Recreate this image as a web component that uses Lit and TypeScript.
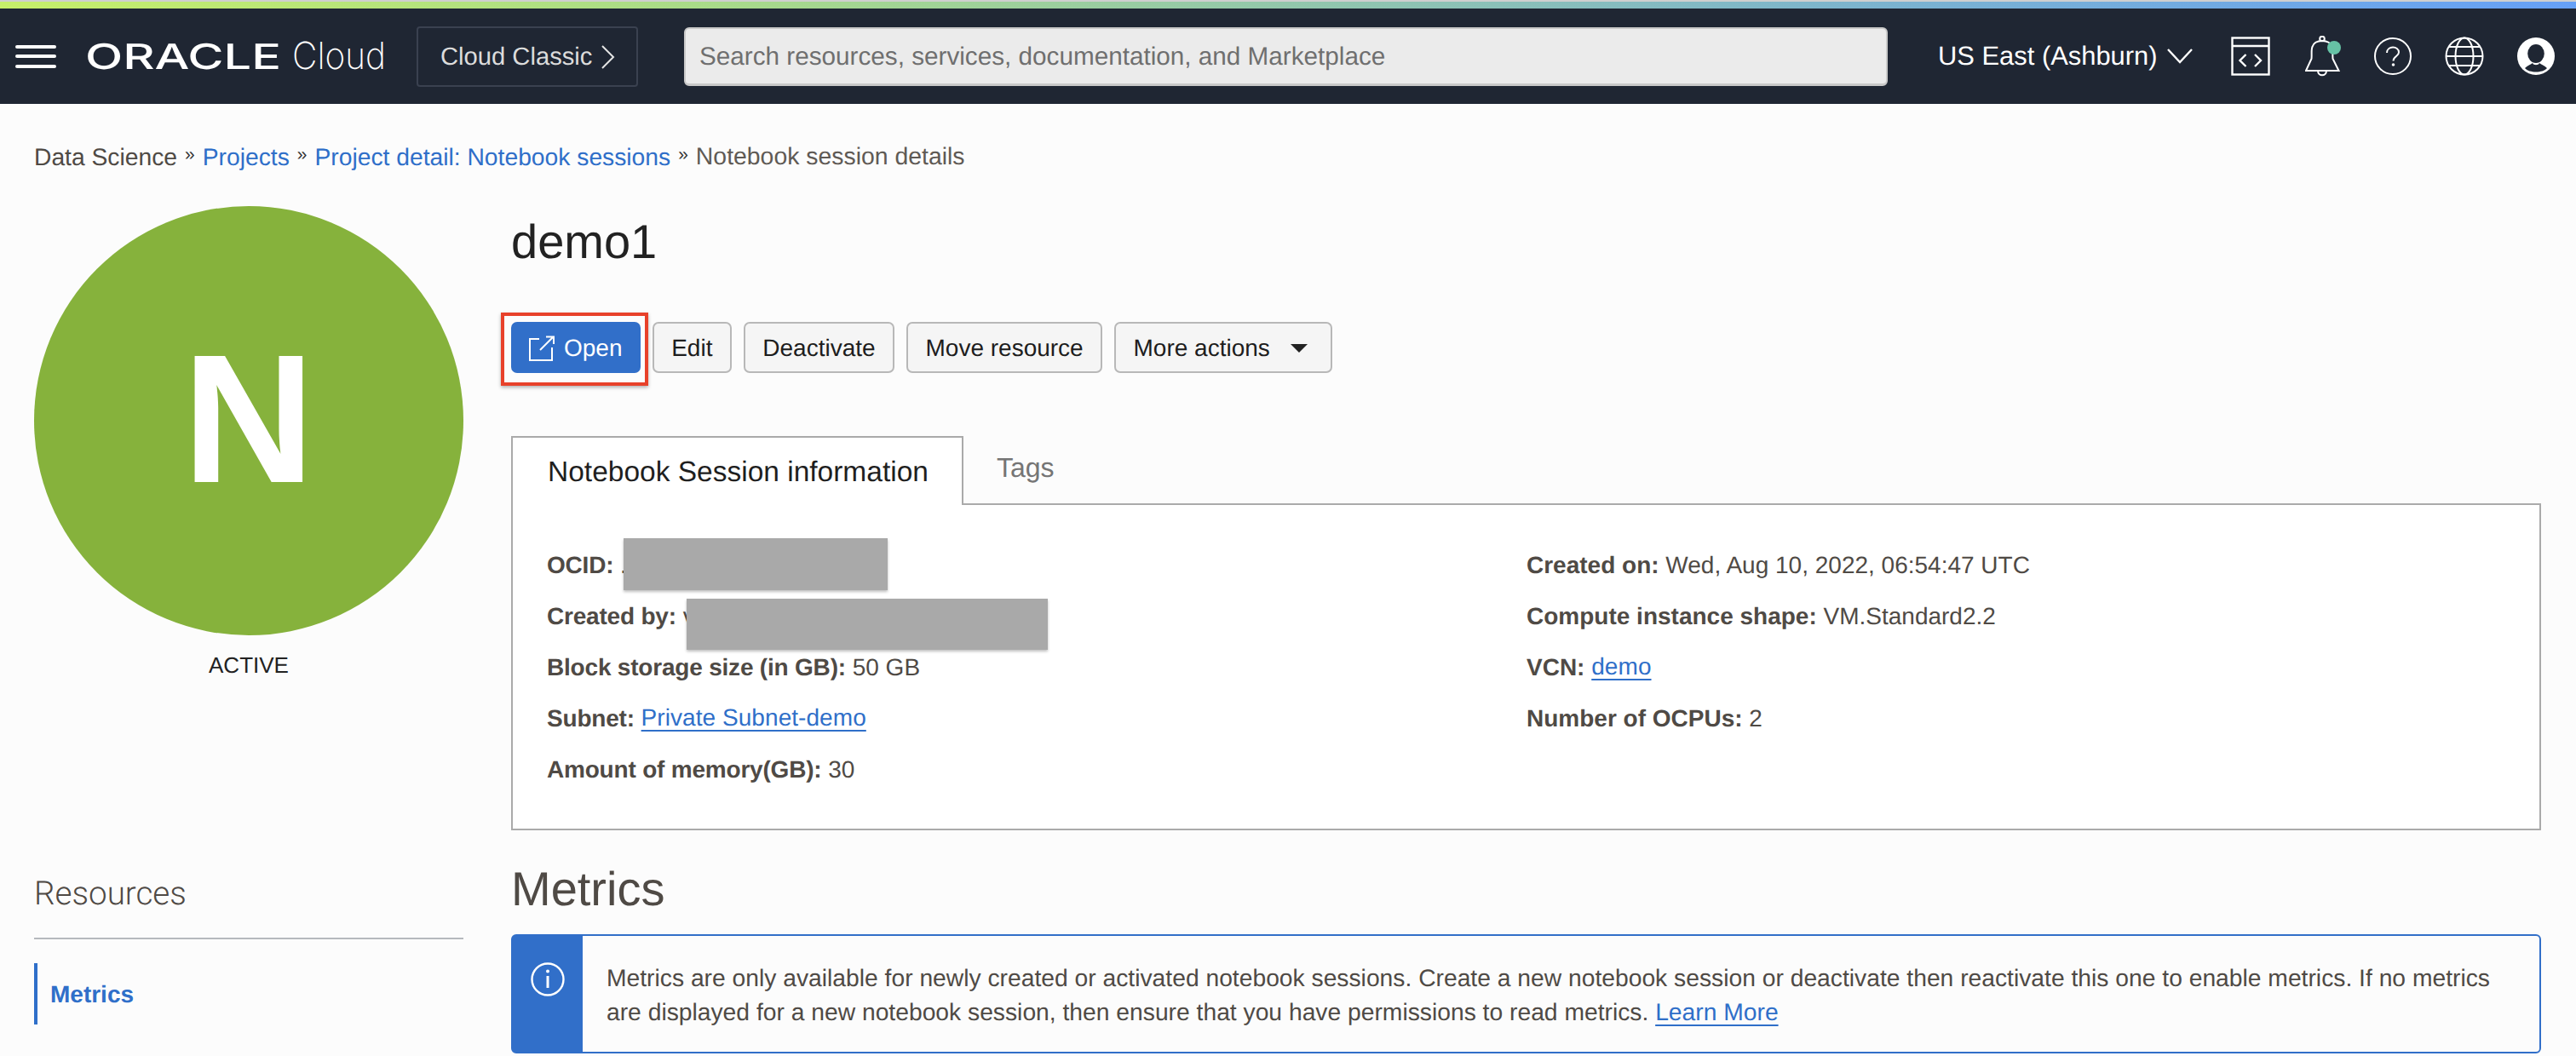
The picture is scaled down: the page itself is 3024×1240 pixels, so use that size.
import { LitElement, html, css, svg } from "lit";
import { customElement } from "lit/decorators.js";

const chevronRight = svg`<path d="M2 1 L15 14 L2 27" fill="none" stroke="#e4e4e4" stroke-width="2"/>`;

@customElement("app-root")
export class AppRoot extends LitElement {
  static styles = css`
    :host { display: block; width: 3024px; height: 1240px; overflow: hidden; background: #fcfcfc;
      font-family: "Liberation Sans", Arial, sans-serif; font-size: 28px; color: #4f4a45; text-rendering: geometricPrecision; }
    * { box-sizing: border-box; }
    a { color: #2f6fc9; text-decoration: none; }
    a.u { text-decoration: underline; text-underline-offset: 5px; text-decoration-thickness: 2px; }
    .strip { height: 2px; background: #cfcfcf; }
    .grad { height: 8px; background: linear-gradient(90deg, #c6ef6a 0%, #a9db88 27%, #7bb3cf 73%, #66a0f7 100%); }
    .bar { height: 112px; background: #1f2633; display: flex; align-items: center; color: #fff; }
    .burger { margin-left: 18px; width: 48px; height: 27px; display: flex; flex-direction: column; justify-content: space-between; }
    .burger i { display: block; height: 4px; border-radius: 2px; background: #fff; }
    .logo { margin-left: 34px; display: block; overflow: visible; }
    .logo text { fill: #fff; font-family: Inter, "Liberation Sans", sans-serif; }
    .classic { margin-left: 35px; width: 260px; height: 71px; border: 2px solid #3a4150; border-radius: 4px;
      display: flex; align-items: center; padding-left: 26px; padding-top: 2px; color: #dcdcdc; font-size: 29.2px; gap: 10px; white-space: nowrap; }
    .search { margin-left: 54px; width: 1413px; height: 69px; background: #ebebeb; border-radius: 6px;
      border: 2px solid #c9c9c9; border-bottom-width: 3px; display: flex; align-items: center; padding-left: 16px; padding-top: 2px; color: #6f6f6f; font-size: 29.7px; white-space: nowrap; }
    .region { margin-left: 59px; font-size: 30.9px; width: 344px; display: flex; align-items: center; gap: 11px; white-space: nowrap; }
    .ico { display: block; flex: none; }
    .icons { display: flex; align-items: center; gap: 39px; }
    .crumbs { margin: 42px 0 0 40px; height: 40px; line-height: 40px; display: flex; align-items: center; white-space: nowrap; font-size: 28.25px; }
    .crumbs .sep { margin: 0 9px 0 9px; color: #333; font-size: 21px; position: relative; top: -2px; }
    .crumbs .cur { color: #5f5a55; font-size: 28.4px; }
    .main { display: flex; padding: 38px 41px 0 40px; }
    .left { width: 504px; flex: none; }
    .circle { width: 504px; height: 504px; border-radius: 50%; background: #86b23c; color: #fff; display: flex; align-items: center; justify-content: center;
      font-size: 215px; font-weight: 700; padding-bottom: 4px; }
    .state { margin-top: 15px; height: 40px; line-height: 40px; text-align: center; font-size: 26px; color: #222; }
    .res-h { margin-top: 222px; height: 80px; border-bottom: 2px solid #b6b9be; font-family: Roboto, "Liberation Sans", sans-serif; font-weight: 300; font-size: 38.6px; line-height: 50px; padding-top: 2px; }
    .res-item { margin-top: 28px; height: 72px; border-left: 4px solid #2f6fc9; padding: 2px 0 0 15px; display: flex; align-items: center; color: #2f6fc9; font-weight: 700; }
    .right { flex: 1; min-width: 0; margin-left: 56px; }
    h1 { margin: 10px 0 0; font-size: 56px; line-height: 64px; font-weight: 400; color: #222; }
    .tools { margin-top: 62px; display: flex; gap: 14.5px; }
    .btn { height: 60px; border: 2px solid #b8b8b8; border-radius: 7px; background: #f5f5f5; color: #1d1d1d; display: flex; align-items: center; padding: 2px 20.2px 0; white-space: nowrap; }
    .btn.primary { background: #316fc9; border-color: #316fc9; color: #fff; gap: 10px; padding: 2px 19px 0 18px; position: relative; }
    .mark { position: absolute; left: -14px; right: -11px; top: -13px; bottom: -17px; border: 4px solid #e8412a; box-shadow: 0 2px 4px rgba(0,0,0,.3); }
    .caret { width: 0; height: 0; margin-left: 24px; margin-right: 7px; border-left: 10.5px solid transparent; border-right: 10.5px solid transparent; border-top: 10.5px solid #222; }
    .tabs { margin-top: 74px; display: flex; align-items: stretch; height: 79px; position: relative; }
    .tab { padding: 2px 41px 0; width: 531px; border: 2px solid #aaa; border-bottom: 0; background: #fff; color: #1f1f1f; font-size: 33.5px; display: flex; align-items: center; white-space: nowrap; position: relative; z-index: 1; margin-bottom: -2px; height: 81px; }
    .tab2 { padding-left: 39px; color: #757575; font-size: 32px; display: flex; align-items: center; padding-bottom: 4px; }
    .panel { border: 2px solid #aaa; background: #fff; height: 384px; padding: 41px 40px 0; display: grid; grid-template-columns: 1150px 1fr; }
    .col > div { height: 60px; line-height: 60px; white-space: nowrap; position: relative; }
    .col a { letter-spacing: 0.06px; position: relative; top: -1px; }
    b { font-weight: 700; }
    .narrow b { letter-spacing: -0.2px; }
    .redact { position: absolute; background: #a9a9a9; box-shadow: 0 2px 3px rgba(0,0,0,.25); }
    h2 { margin: 37px 0 0; font-size: 56px; line-height: 64px; font-weight: 400; color: #4f4a45; }
    .alert { margin-top: 21px; height: 140px; border: 2px solid #316fc9; border-radius: 6px; display: flex; background: #fcfcfc; }
    .alert .side { width: 82px; flex: none; background: #316fc9; display: flex; justify-content: center; padding-top: 31px; }
    .alert .txt { padding: 29px 40px 0 28px; line-height: 40px; font-size: 28.26px; }
  `;

  row(label: string, value: unknown) {
    return html`<div><b>${label}</b> ${value}</div>`;
  }

  render() {
    return html`
      <div class="strip"></div><div class="grad"></div>
      <header class="bar">
        <div class="burger"><i></i><i></i><i></i></div>
        <svg class="logo" width="354" height="40" viewBox="0 0 354 40">
          <text x="0" y="35" font-size="41" font-weight="500" textLength="230" lengthAdjust="spacingAndGlyphs">ORACLE</text>
          <text x="243" y="35" font-size="44" font-weight="200" textLength="110" lengthAdjust="spacingAndGlyphs">Cloud</text>
        </svg>
        <div class="classic"><span>Cloud Classic</span>
          <svg class="ico" width="18" height="28" viewBox="0 0 18 28">${chevronRight}</svg></div>
        <div class="search">Search resources, services, documentation, and Marketplace</div>
        <div class="region"><span>US East (Ashburn)</span>
          <svg class="ico" width="30" height="18" viewBox="0 0 30 18"><path d="M1 1 L15 16 L29 1" fill="none" stroke="#fff" stroke-width="2.4"/></svg></div>
        <div class="icons">
          <svg class="ico" style="margin-right:2px" width="46" height="46" viewBox="0 0 46 46" fill="none" stroke="#fff" stroke-width="2.4">
            <rect x="1.5" y="1.5" width="43" height="43"/><path d="M1.5 11 H44.5"/><path d="M17.500 21 L10.500 28 L17.500 35 M28 21 L35 28 L28 35"/></svg>
          <svg class="ico" width="42" height="48" viewBox="0 0 42 48" fill="none" stroke="#fff" stroke-width="2">
            <circle cx="20" cy="3.500" r="2.800"/>
            <path d="M1 41 L7.500 27 C8 22 7 16 8.500 13 C10 8 15 6 20 6 C25 6 30 8 31.500 13 C33 16 32 22 32.500 27 L39.500 41 Z"/>
            <path d="M15 41 C15 48 25 48 25 41"/><circle cx="34" cy="14" r="8" fill="#66c2a5" stroke="none"/></svg>
          <svg class="ico" width="44" height="44" viewBox="0 0 44 44" fill="none" stroke="#fff" stroke-width="2">
            <circle cx="22" cy="22" r="21"/><path d="M15 18 C15 9.500 29 9.500 29 17.500 C29 22 22.500 22 22.500 27.500"/><circle cx="22.500" cy="32" r="1.800" fill="#fff" stroke="none"/></svg>
          <svg class="ico" width="46" height="46" viewBox="0 0 46 46" fill="none" stroke="#fff" stroke-width="2">
            <circle cx="23" cy="23" r="21.500"/><ellipse cx="23" cy="23" rx="10.500" ry="21.500"/><path d="M4 12 H42 M1.500 23 H44.500 M4 34 H42"/></svg>
          <svg class="ico" width="44" height="46" viewBox="0 0 44 46" fill="#1f2633">
            <circle cx="22" cy="23" r="22" fill="#fff"/><ellipse cx="22" cy="20" rx="9.800" ry="11"/>
            <path d="M9 37 C12 34 16 32.500 18 31 C19 34 25 34 26 31 C28 32.500 32 34 35 37 C30 43 14 43 9 37 Z"/></svg>
        </div>
      </header>

      <nav class="crumbs">
        <span>Data Science</span><span class="sep">»</span>
        <a href="#">Projects</a><span class="sep">»</span>
        <a href="#">Project detail: Notebook sessions</a><span class="sep">»</span>
        <span class="cur">Notebook session details</span>
      </nav>

      <div class="main">
        <aside class="left">
          <div class="circle">N</div>
          <div class="state">ACTIVE</div>
          <div class="res-h">Resources</div>
          <div class="res-item">Metrics</div>
        </aside>
        <section class="right">
          <h1>demo1</h1>
          <div class="tools">
            <div class="btn primary">
              <svg class="ico" width="32" height="30" viewBox="0 0 32 30" fill="none" stroke="#fff" stroke-width="2">
                <path d="M13 4 H2 V29 H28 V14"/><path d="M14 17 L29 2 M21 1.500 H30 V10"/></svg>
              <span>Open</span><div class="mark"></div>
            </div>
            <div class="btn">Edit</div>
            <div class="btn">Deactivate</div>
            <div class="btn">Move resource</div>
            <div class="btn">More actions<span class="caret"></span></div>
          </div>
          <div class="tabs"><div class="tab">Notebook Session information</div><div class="tab2">Tags</div></div>
          <div class="panel">
            <div class="col narrow">
              ${this.row("OCID:", html`.<span class="redact" style="left:90px;top:-2px;width:310px;height:61px"></span>`)}
              ${this.row("Created by:", html`v<span class="redact" style="left:164px;top:9px;width:424px;height:60px"></span>`)}
              ${this.row("Block storage size (in GB):", "50 GB")}
              ${this.row("Subnet:", html`<a class="u" href="#">Private Subnet-demo</a>`)}
              ${this.row("Amount of memory(GB):", "30")}
            </div>
            <div class="col">
              ${this.row("Created on:", "Wed, Aug 10, 2022, 06:54:47 UTC")}
              ${this.row("Compute instance shape:", "VM.Standard2.2")}
              ${this.row("VCN:", html`<a class="u" href="#">demo</a>`)}
              ${this.row("Number of OCPUs:", "2")}
            </div>
          </div>
          <h2>Metrics</h2>
          <div class="alert">
            <div class="side">
              <svg class="ico" width="40" height="40" viewBox="0 0 40 40" fill="none" stroke="#fff" stroke-width="2.400">
                <circle cx="20" cy="20" r="18.500"/><path d="M20 16 V30" stroke-width="3"/><circle cx="20" cy="10.500" r="2" fill="#fff" stroke="none"/></svg>
            </div>
            <div class="txt">Metrics are only available for newly created or activated notebook sessions. Create a new notebook session or deactivate then reactivate this one to enable metrics. If no metrics are displayed for a new notebook session, then ensure that you have permissions to read metrics. <a class="u" href="#">Learn More</a></div>
          </div>
        </section>
      </div>
    `;
  }
}
